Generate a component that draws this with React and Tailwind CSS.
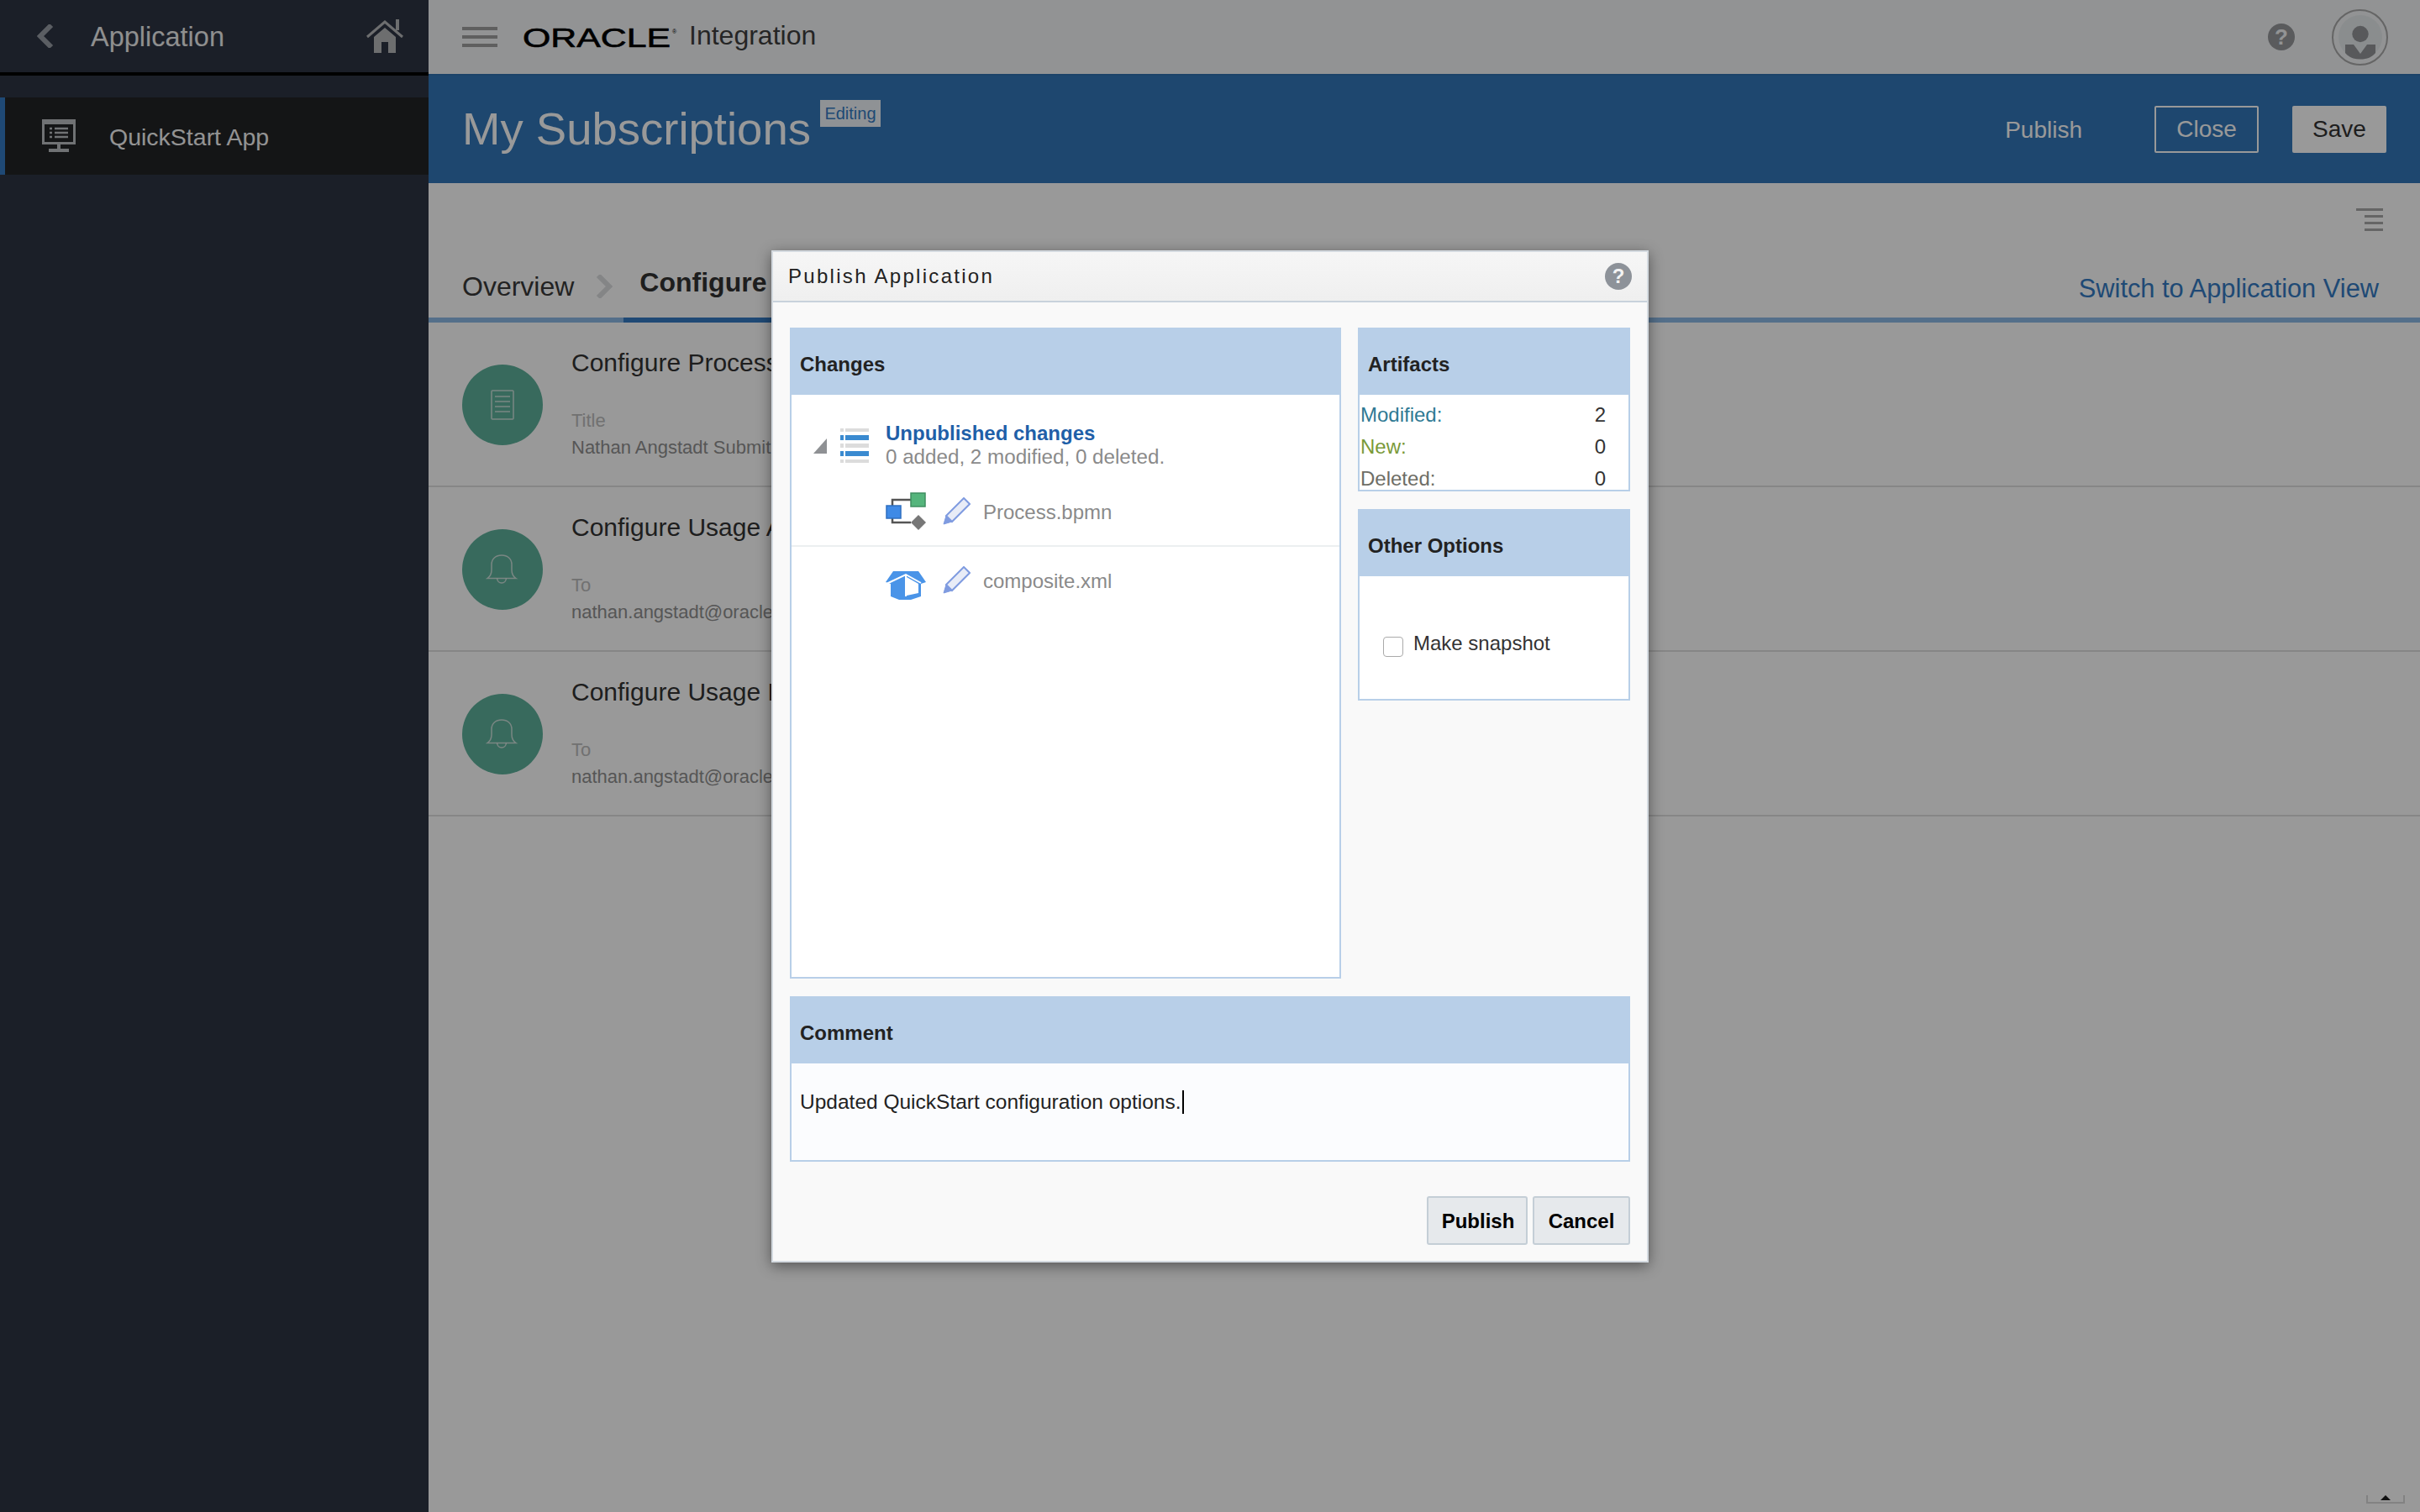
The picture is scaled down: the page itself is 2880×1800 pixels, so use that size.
import React from 'react';

function Bell() {
  return (
    <svg width="40" height="36" viewBox="0 0 40 36" fill="none" stroke="#f0f0f0" strokeOpacity="0.75" strokeWidth="1.5">
      <path d="M2 28.5h34c-3-2-5-5-5-10V12C31 5.5 26 1 19 1S7 5.500 7 12v6.500c0 5-2 8-5 10z" />
      <path d="M13.500 28.500c.5 3.500 3 5.500 5.500 5.500s5-2 5.500-5.500" />
    </svg>
  );
}

function DocIcon() {
  return (
    <svg width="28" height="36" viewBox="0 0 28 36" fill="none" stroke="#f0f0f0" strokeOpacity="0.75" strokeWidth="1.5">
      <rect x="1" y="1" width="26" height="34" rx="1" />
      <path d="M5 8h18M5 14h18M5 20h18M5 26h18" />
    </svg>
  );
}

function Pencil() {
  return (
    <svg width="33" height="33" viewBox="0 0 33 33">
      <path d="M25 1l7 7-21 21-7-7z" fill="#e8ecf7" stroke="#7f9be0" strokeWidth="2" />
      <path d="M4 22l7 7-10 3z" fill="#7f9be0" stroke="#7f9be0" />
    </svg>
  );
}

function ProcessIcon() {
  return (
    <svg width="48" height="46" viewBox="0 0 48 46" fill="none">
      <path d="M8 16V9h22M8 31v5h22" stroke="#555" strokeWidth="2.500" />
      <rect x="30" y="1" width="17" height="16" fill="#55b57c" stroke="#3f8f60" strokeWidth="1.500" />
      <rect x="1" y="16" width="17" height="15" fill="#3f8ae6" stroke="#2f6fc0" strokeWidth="1.500" />
      <path d="M39 27l9 9-9 9-9-9z" fill="#777" />
    </svg>
  );
}

function BoxIcon() {
  return (
    <svg width="48" height="34" viewBox="0 0 48 34">
      <path d="M9 0h30l9 13-6 2v15l-12 4H16L6 30V15l-6-2z" fill="#4a94e8" />
      <path d="M1 15L24 4l18 10" stroke="#fff" strokeWidth="2" fill="none" />
      <path d="M24 4v26" stroke="#fff" strokeWidth="2" />
      <path d="M25 7l14 8v11l-14 3z" fill="#fff" />
    </svg>
  );
}

function ListIcon() {
  const bars = [
    ['h-[4px]', 'bg-[#dcdcdc]'],
    ['h-[6px]', 'bg-[#3a8ad0]'],
    ['h-[5px]', 'bg-[#dcdcdc]'],
    ['h-[6px]', 'bg-[#3a8ad0]'],
    ['h-[4px]', 'bg-[#dcdcdc]'],
  ];
  return (
    <div className="flex w-[34px] flex-col gap-[4px]">
      {bars.map(([h, c], i) => (
        <div key={i} className="flex gap-[2px]">
          <div className={`w-[4px] ${h} ${c}`} />
          <div className={`flex-1 ${h} ${c}`} />
        </div>
      ))}
    </div>
  );
}

function PanelHead({ children }) {
  return (
    <div className="flex h-[80px] shrink-0 items-center bg-[#b8cfe8] pl-[12px] pt-[8px] text-[24px] font-bold leading-[30px] text-[#222]">
      {children}
    </div>
  );
}

function ConfigRow({ icon, title, label, value }) {
  return (
    <div className="flex h-[196px] border-b-2 border-[#dfdfdf] pl-[40px]">
      <div className="mt-[50px] flex h-[96px] w-[96px] items-center justify-center rounded-full bg-[#5eb19b]">
        {icon}
      </div>
      <div className="ml-[34px] pt-[30px]">
        <div className="text-[30px] leading-[36px] text-[#333]">{title}</div>
        <div className="mt-[36px] text-[22px] leading-[30px] text-[#bcbcbc]">{label}</div>
        <div className="text-[22px] leading-[34px] text-[#909090]">{value}</div>
      </div>
    </div>
  );
}

export default function App() {
  return (
    <div className="relative flex h-[1800px] w-[2880px] overflow-hidden bg-white font-['Liberation_Sans',sans-serif]">
      {/* sidebar */}
      <aside className="w-[510px] shrink-0 bg-[#2d3443]">
        <div className="flex h-[90px] items-center border-b-4 border-black pl-[44px] pr-[30px]">
          <svg width="20" height="28" viewBox="0 0 20 28">
            <path d="M17 1L4 14l13 13" fill="none" stroke="#989da5" strokeWidth="6" />
          </svg>
          <span className="ml-[44px] pt-[3px] text-[32.500px] text-[#eeeeee]">Application</span>
          <svg className="ml-auto" width="44" height="40" viewBox="0 0 44 40" fill="#b6b7ba">
            <path d="M1 21L22 3l21 18" fill="none" stroke="#b6b7ba" strokeWidth="3" />
            <path d="M35 0h4v13h-4z" />
            <path d="M9 21L22 10l13 11v19h-9V27h-8v13H9z" />
          </svg>
        </div>
        <div className="mt-[26px] flex h-[92px] items-center border-l-[6px] border-[#347bc3] bg-[#222326] pl-[44px]">
          <svg width="40" height="40" viewBox="0 0 40 40" fill="none">
            <rect x="1.500" y="1.500" width="37" height="27" stroke="#bbbec1" strokeWidth="3" />
            <path d="M0 2h40v4H0z" fill="#bbbec1" />
            <path d="M9 11h3M15 11h16M9 16h3M15 16h16M9 21h3M15 21h16" stroke="#bbbec1" strokeWidth="2.500" />
            <path d="M18 29h4v6h-4zM8 35h24v4H8z" fill="#bbbec1" />
          </svg>
          <span className="ml-[40px] pt-[2px] text-[28.500px] text-[#f5f5f5]">QuickStart App</span>
        </div>
      </aside>

      {/* main column */}
      <main className="flex-1">
        <header className="flex h-[88px] items-center bg-[#f3f5f7] pl-[40px] pr-[38px]">
          <div className="flex w-[42px] flex-col gap-[6px]">
            <div className="h-[4px] bg-[#9f9f9f]" />
            <div className="h-[4px] bg-[#9f9f9f]" />
            <div className="h-[4px] bg-[#9f9f9f]" />
          </div>
          <svg className="ml-[30px]" width="190" height="40" viewBox="0 0 190 40">
            <text x="0" y="32" fontSize="31" textLength="176" lengthAdjust="spacingAndGlyphs" fill="#000" stroke="#000" strokeWidth="0.6">ORACLE</text>
            <text x="178" y="16" fontSize="7" fill="#000">®</text>
          </svg>
          <span className="ml-[8px] mb-[4px] text-[32px] text-[#3f3f3f]">Integration</span>
          <div className="ml-auto flex h-[32px] w-[32px] items-center justify-center rounded-full bg-[#96989b] text-[26px] font-bold text-[#f3f5f7]">?</div>
          <div className="ml-[44px] flex h-[67px] w-[67px] items-center justify-center rounded-full border-2 border-[#a8a8a8]">
            <svg width="54" height="54" viewBox="0 0 54 54">
              <circle cx="27" cy="27" r="26" fill="#e6ebed" />
              <circle cx="27" cy="23.500" r="9.700" fill="#939598" />
              <path d="M9 36h10l8 11 8-11h10v10c-4 5-10 7.500-18 7.500S13 51 9 46z" fill="#939598" />
            </svg>
          </div>
        </header>

        <div className="flex h-[130px] items-center border-t-2 border-[#2f70b0] bg-[#3277b9] pl-[40px] pr-[40px]">
          <h1 className="text-[54.500px] font-normal text-white">My Subscriptions</h1>
          <span className="mb-[38px] ml-[11px] flex h-[32px] w-[72px] items-center justify-center bg-[#eef3f8] text-[20px] text-[#347bc3]">Editing</span>
          <span className="ml-auto pt-[1px] text-[28px] text-white">Publish</span>
          <button className="ml-[86px] h-[56px] w-[124px] rounded-[2px] border-2 border-white text-[28px] text-white">Close</button>
          <button className="ml-[40px] h-[56px] w-[112px] rounded-[2px] bg-white text-[28px] text-[#333]">Save</button>
        </div>

        <div className="flex h-[160px] flex-col pl-[40px] pr-[40px]">
          <svg className="ml-auto mr-[4px] mt-[30px]" width="32" height="27" viewBox="0 0 32 27" fill="#a8a8a8">
            <path d="M0 0h32v3H0zM10 8h22v3H10zM10 16h22v3H10zM10 24h22v3H10z" />
          </svg>
          <div className="mt-auto flex items-center pb-[12px]">
            <span className="text-[32px] leading-[40px] text-[#3a3a3a]">Overview</span>
            <svg className="ml-[26px]" width="20" height="28" viewBox="0 0 20 28">
              <path d="M3 1l13 13L3 27" fill="none" stroke="#dcdee0" strokeWidth="6" />
            </svg>
            <span className="ml-[32px] mb-[10px] text-[32px] font-bold leading-[40px] text-[#333]">Configure</span>
            <span className="ml-auto mr-[9px] mt-[6px] text-[30.800px] leading-[40px] text-[#347bc3]">Switch to Application View</span>
          </div>
        </div>
        <div className="flex h-[6px] bg-[#8cb9e6]">
          <div className="ml-[232px] w-[300px] bg-[#347bc3]" />
        </div>

        <ConfigRow icon={<DocIcon />} title="Configure Process Form" label="Title" value="Nathan Angstadt Submit" />
        <ConfigRow icon={<Bell />} title="Configure Usage Alerts" label="To" value="nathan.angstadt@oracle.com" />
        <ConfigRow icon={<Bell />} title="Configure Usage Limits" label="To" value="nathan.angstadt@oracle.com" />
      </main>

      {/* dim layer */}
      <div className="absolute inset-0 bg-black/40" />

      {/* small tab at the page corner */}
      <div className="absolute bottom-[10px] right-[18px] flex h-[10px] w-[46px] justify-center border-x-2 border-b-2 border-[#828282]">
        <svg width="12" height="6" viewBox="0 0 12 6"><path d="M6 0l6 6H0z" fill="#111" /></svg>
      </div>

      {/* dialog */}
      <div className="absolute inset-0 flex items-center justify-center">
        <div className="flex h-[1205px] w-[1044px] flex-col border-2 border-[#d4dae0] bg-[#f9f9f9] shadow-[0_4px_16px_rgba(0,0,0,0.45)]">
          <div className="flex h-[60px] shrink-0 items-center justify-between border-b-2 border-[#c8d2dc] bg-linear-to-b from-[#f6f6f6] to-[#efefef] pl-[18px] pr-[18px]">
            <span className="text-[24px] tracking-[2.300px] text-[#222]">Publish Application</span>
            <span className="flex h-[32px] w-[32px] items-center justify-center rounded-full bg-[#8d9299] text-[24px] font-bold text-[#f3f3f3]">?</span>
          </div>

          <div className="flex flex-1 flex-col px-[20px] pt-[30px]">
            <div className="flex gap-[20px]">
              <section className="flex h-[775px] w-[656px] flex-col">
                <PanelHead>Changes</PanelHead>
                <div className="flex-1 border-x-2 border-b-2 border-[#b8cfe8] bg-white">
                  <div className="flex h-[88px] pl-[26px] pt-[31px]">
                    <svg className="mt-[21px]" width="16" height="18" viewBox="0 0 16 18"><path d="M16 0v18H0z" fill="#8f9194" /></svg>
                    <div className="ml-[16px] mt-[9px]"><ListIcon /></div>
                    <div className="ml-[20px]">
                      <div className="text-[24px] font-bold leading-[30px] text-[#1f5fa8]">Unpublished changes</div>
                      <div className="text-[24.200px] leading-[26px] text-[#8a8a8a]">0 added, 2 modified, 0 deleted.</div>
                    </div>
                  </div>
                  <div className="flex h-[93px] items-center border-b-2 border-[#eceff0] pl-[112px] pt-[11px]">
                    <ProcessIcon />
                    <div className="ml-[20px]"><Pencil /></div>
                    <span className="ml-[15px] pt-[2px] text-[24px] text-[#8a8a8a]">Process.bpmn</span>
                  </div>
                  <div className="flex h-[80px] items-center pl-[112px]">
                    <div className="mt-[12px]"><BoxIcon /></div>
                    <div className="ml-[20px]"><Pencil /></div>
                    <span className="ml-[15px] pt-[2px] text-[24px] text-[#8a8a8a]">composite.xml</span>
                  </div>
                </div>
              </section>

              <div className="flex w-[324px] flex-col gap-[21px]">
                <section className="flex h-[195px] flex-col">
                  <PanelHead>Artifacts</PanelHead>
                  <div className="flex-1 overflow-hidden border-x-2 border-b-2 border-[#b8cfe8] bg-white pt-[5px] text-[24px]">
                    <div className="flex h-[38px] items-center justify-between pl-[1px] pr-[27px]">
                      <span className="text-[#2f7a94]">Modified:</span><span className="text-[#333]">2</span>
                    </div>
                    <div className="flex h-[38px] items-center justify-between pl-[1px] pr-[27px]">
                      <span className="text-[#7a9a3a]">New:</span><span className="text-[#333]">0</span>
                    </div>
                    <div className="flex h-[38px] items-center justify-between pl-[1px] pr-[27px]">
                      <span className="text-[#6e6e66]">Deleted:</span><span className="text-[#333]">0</span>
                    </div>
                  </div>
                </section>
                <section className="flex h-[228px] flex-col">
                  <PanelHead>Other Options</PanelHead>
                  <div className="flex flex-1 items-start border-x-2 border-b-2 border-[#b8cfe8] bg-white pl-[28px] pt-[72px]">
                    <span className="h-[24px] w-[24px] rounded-[4px] border border-[#aaaaaa] bg-white" />
                    <span className="ml-[12px] mt-[-7px] text-[24px] leading-[30px] text-[#333]">Make snapshot</span>
                  </div>
                </section>
              </div>
            </div>

            <section className="mt-[21px] flex h-[197px] flex-col">
              <PanelHead>Comment</PanelHead>
              <div className="flex flex-1 items-start border-x-2 border-b-2 border-[#b8cfe8] bg-[#fbfcfe] pl-[10px] pt-[32px]">
                <span className="text-[24.500px] leading-[28px] text-[#222]">Updated QuickStart configuration options.</span>
                <span className="ml-[1px] h-[28px] w-[2px] bg-black" />
              </div>
            </section>

            <div className="mt-[41px] flex justify-end gap-[6px]">
              <button className="h-[58px] w-[120px] rounded-[3px] border-2 border-[#c4ced6] bg-[#e6e9ec] pl-[2px] pt-[3px] text-[24px] font-bold text-black">Publish</button>
              <button className="h-[58px] w-[116px] rounded-[3px] border-2 border-[#c4ced6] bg-[#e6e9ec] pt-[3px] text-[24px] font-bold text-black">Cancel</button>
            </div>
          </div>
        </div>
      </div>
    </div>
  );
}
